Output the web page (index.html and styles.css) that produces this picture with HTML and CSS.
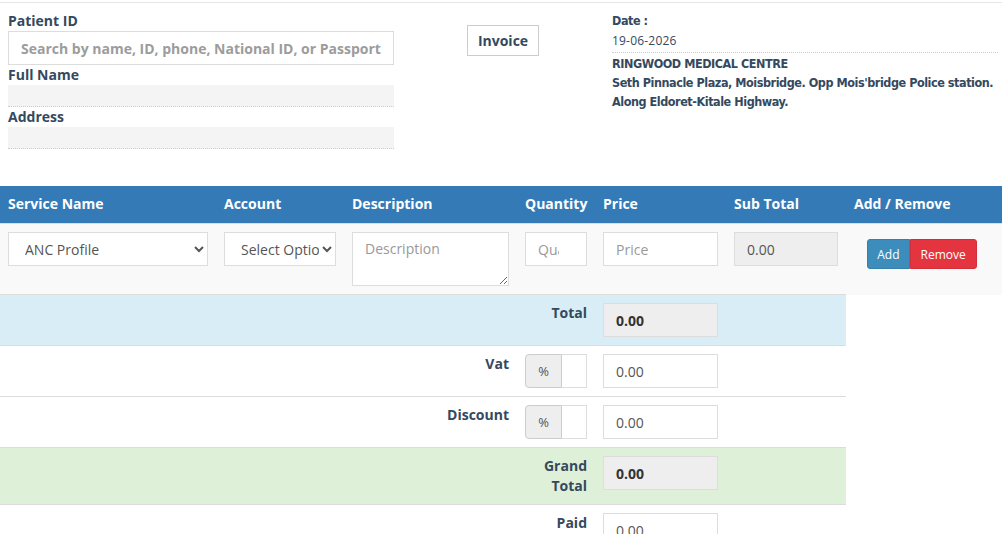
FILE: index.html
```html
<!DOCTYPE html>
<html>
<head>
<meta charset="utf-8">
<link rel="stylesheet" href="styles.css">
</head>
<body>
<div class="page">
  <div class="top">
    <div class="patient">
      <div class="lbl">Patient ID</div>
      <input class="search" type="text" placeholder="Search by name, ID, phone, National ID, or Passport">
      <div class="lbl">Full Name</div>
      <div class="field"></div>
      <div class="lbl">Address</div>
      <div class="field"></div>
    </div>
    <div class="mid">
      <button class="invoice">Invoice</button>
    </div>
    <div class="clinic">
      <div class="date-lbl">Date :</div>
      <div class="date">19-06-2026</div>
      <div class="name">RINGWOOD MEDICAL CENTRE</div>
      <div class="addr">Seth Pinnacle Plaza, Moisbridge. Opp Mois'bridge Police station.</div>
      <div class="addr">Along Eldoret-Kitale Highway.</div>
    </div>
  </div>

  <table class="items">
    <colgroup>
      <col class="c1"><col class="c2"><col class="c3"><col class="c4"><col class="c5"><col class="c6"><col class="c7">
    </colgroup>
    <thead>
      <tr>
        <th>Service Name</th>
        <th>Account</th>
        <th>Description</th>
        <th>Quantity</th>
        <th>Price</th>
        <th>Sub Total</th>
        <th>Add / Remove</th>
      </tr>
    </thead>
    <tbody>
      <tr class="item">
        <td><select class="ctl"><option>ANC Profile</option></select></td>
        <td><select class="ctl"><option>Select Option</option></select></td>
        <td><textarea class="ctl desc" placeholder="Description"></textarea></td>
        <td><input class="ctl" type="number" placeholder="Quantity"></td>
        <td><input class="ctl" type="number" placeholder="Price"></td>
        <td><input class="ctl ro" type="text" value="0.00" readonly></td>
        <td class="actions"><span class="btn-group"><button class="btn add">Add</button><button class="btn remove">Remove</button></span></td>
      </tr>
      <tr class="sum info">
        <td colspan="3"></td>
        <td class="label">Total</td>
        <td><input class="ctl ro strong" type="text" value="0.00" readonly></td>
        <td></td>
      </tr>
      <tr class="sum">
        <td colspan="2"></td>
        <td class="label">Vat</td>
        <td><div class="group"><span class="addon">%</span><input class="ctl gin" type="text"></div></td>
        <td><input class="ctl" type="text" value="0.00"></td>
        <td></td>
      </tr>
      <tr class="sum">
        <td colspan="2"></td>
        <td class="label">Discount</td>
        <td><div class="group"><span class="addon">%</span><input class="ctl gin" type="text"></div></td>
        <td><input class="ctl" type="text" value="0.00"></td>
        <td></td>
      </tr>
      <tr class="sum success">
        <td colspan="3"></td>
        <td class="label">Grand Total</td>
        <td><input class="ctl ro strong" type="text" value="0.00" readonly></td>
        <td></td>
      </tr>
      <tr class="sum">
        <td colspan="3"></td>
        <td class="label">Paid</td>
        <td><input class="ctl" type="text" value="0.00"></td>
        <td></td>
      </tr>
    </tbody>
  </table>
</div>
</body>
</html>
```

FILE: styles.css
```css
* { box-sizing: border-box; }
html, body { margin: 0; padding: 0; background: #fff; }
body {
  font-family: "Open Sans", "Liberation Sans", sans-serif;
  font-size: 14px;
  line-height: 20px;
  color: #34495e;
}
.page {
  margin-top: 2px;
  border-top: 1px solid #e6e6e6;
}
.top {
  display: grid;
  grid-template-columns: 386px 218px 386px;
  padding: 8px 4px 0 8px;
}
.lbl {
  font-weight: 700;
  color: #34495e;
  height: 20px;
}
.search {
  display: block;
  width: 100%;
  height: 34px;
  border: 1px solid #ddd;
  padding: 6px 12px;
  font-family: inherit;
  font-size: 14px;
  color: #555;
  outline: none;
}
.search::placeholder { color: #9c9c9c; font-weight: 700; }
.field {
  height: 22px;
  background: #f4f4f4;
  border-bottom: 1px dotted #ccc;
}
.mid { text-align: center; }
.invoice {
  margin-top: 14px;
  width: 72px;
  height: 31px;
  background: #fff;
  border: 1px solid #ccc;
  font-family: inherit;
  font-size: 14px;
  font-weight: 700;
  color: #34495e;
  padding: 0;
}
.clinic {
  font-family: "DejaVu Sans", sans-serif;
  font-stretch: condensed;
  color: #34495e;
  letter-spacing: -0.45px;
  white-space: nowrap;
}
.date-lbl { font-weight: 700; font-size: 12.5px; line-height: 20px; }
.date {
  font-size: 12px;
  line-height: 20px;
  font-family: "Open Sans", sans-serif;
  font-stretch: normal;
  letter-spacing: 0.2px;
  font-weight: 400;
  padding-bottom: 1px;
  border-bottom: 1px dotted #ccc;
}
.name { font-weight: 700; font-size: 12.5px; line-height: 20px; padding-top: 1px; }
.addr { font-weight: 700; font-size: 12.5px; line-height: 20px; margin-top: -1px; }

.items {
  width: 100%;
  margin-top: 37px;
  border-collapse: collapse;
  table-layout: fixed;
}
.c1 { width: 216px; }
.c2 { width: 128px; }
.c3 { width: 173px; }
.c4 { width: 78px; }
.c5 { width: 131px; }
.c6 { width: 120px; }
.c7 { width: 156px; }
.items th {
  background: #337ab7;
  color: #fff;
  text-align: left;
  font-weight: 700;
  padding: 8px 8px 9px;
  line-height: 20px;
}
.items td {
  padding: 8px;
  vertical-align: top;
  border-top: 1px solid #ddd;
}
.item td { background: #f9f9f9; }
.info td { background: #d9edf7; }
.success td { background: #dff0d8; }
.label { text-align: right; font-weight: 700; color: #34495e; }
.ctl {
  display: block;
  width: 100%;
  height: 34px;
  border: 1px solid #ddd;
  background: #fff;
  padding: 6px 12px;
  font-family: "Open Sans", sans-serif;
  font-size: 14px;
  color: #555;
  border-radius: 0;
  outline: none;
}
.ctl::placeholder { color: #999; }
select.ctl { padding: 6px 0 6px 12px; }
.desc { height: 54px; resize: vertical; }
.ro { background: #eee; }
.strong { font-weight: 700; color: #333; }
.actions { text-align: center; padding-right: 12px !important; }
.btn-group { display: inline-flex; margin-top: 7px; }
.btn {
  height: 30px;
  padding: 0 10px;
  font-family: "Open Sans", sans-serif;
  font-size: 12px;
  color: #fff;
  border: 1px solid transparent;
}
.add { background: #3c8dbc; border-color: #367fa9; border-radius: 3px 0 0 3px; padding: 0 9px; }
.remove { background: #e3343f; border-color: #d32f3a; border-radius: 0 3px 3px 0; }
.group { display: flex; }
.addon {
  width: 37px;
  height: 34px;
  background: #eee;
  border: 1px solid #ccc;
  border-radius: 4px 0 0 4px;
  color: #555;
  font-size: 13px;
  text-align: center;
  line-height: 32px;
  flex: none;
}
.gin { border-left: 0; min-width: 0; flex: 1; padding: 6px 4px; }
```
